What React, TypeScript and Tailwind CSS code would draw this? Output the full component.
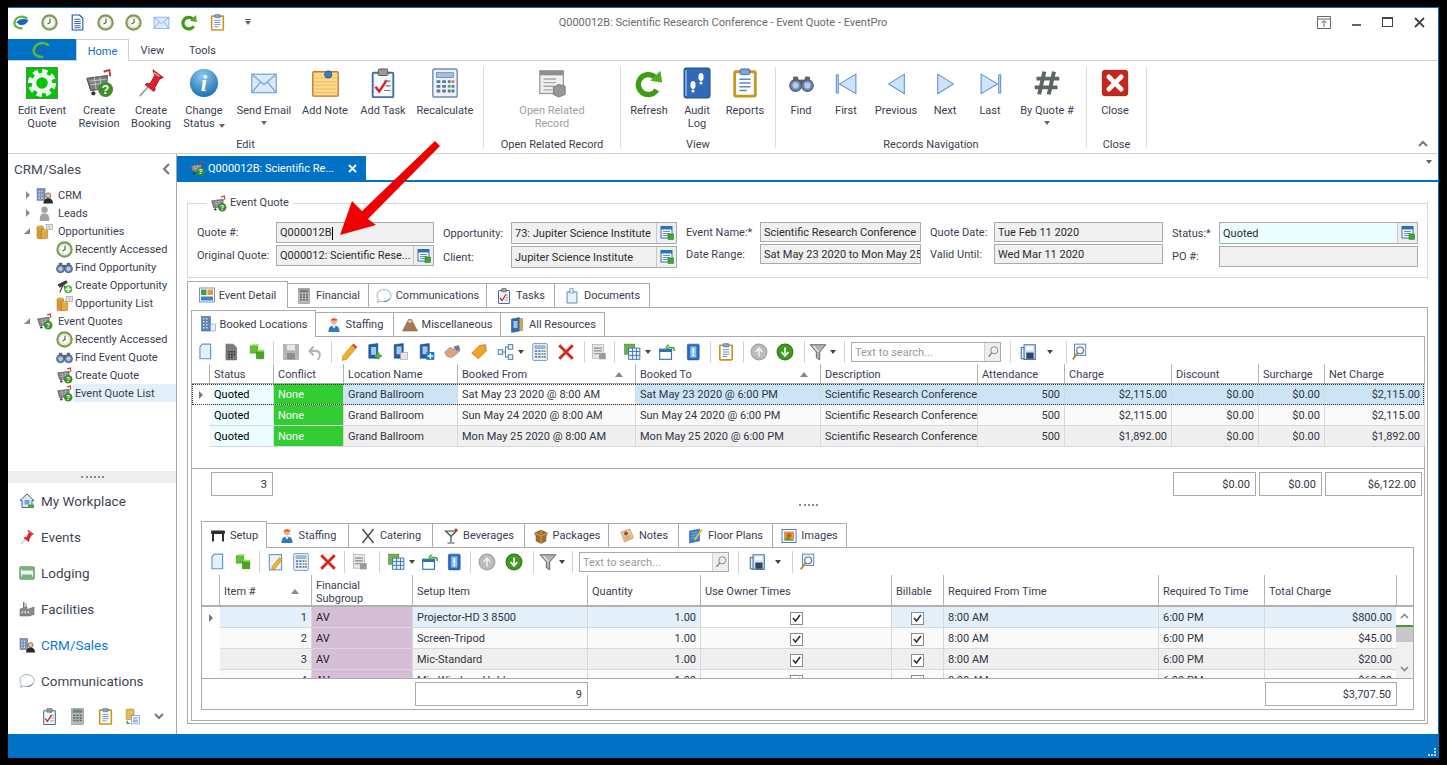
import type { ReactNode } from 'react'

const FONT = "font-['Roboto','Liberation_Sans',sans-serif]"

// every icon is drawn on a 32x32 box and scaled by size
const icons: Record<string, ReactNode> = {
  logo: (<g fill="none"><path d="M27 9C20 2 6 4 3 15c-2 8 6 13 15 12" stroke="#5fb53a" strokeWidth="4" /><path d="M7 16c4-6 14-8 21-4-2 7-11 10-17 7" fill="#1268b8" stroke="#1268b8" strokeWidth="1.5" /></g>),
  clock: (<g><circle cx="16" cy="16" r="13.5" fill="#eef3e4" stroke="#7f9a55" strokeWidth="4" /><circle cx="16" cy="16" r="9" fill="#fff" stroke="#b9c99a" /><path d="M17 9v7l-5 3" fill="none" stroke="#3d4a2a" strokeWidth="2" /></g>),
  doc: (<g><path d="M6 2h14l6 6v22H6z" fill="#fff" stroke="#1d4f9f" strokeWidth="2" /><path d="M10 10h12M10 14h12M10 18h12M10 22h12M10 26h12" stroke="#2d62b5" strokeWidth="2" /></g>),
  mail: (<g><rect x="2" y="6" width="28" height="21" fill="#d9ebfb" stroke="#7ea6d4" strokeWidth="1.5" /><path d="M2 6l14 12L30 6M2 27l10-12M30 27L20 15" fill="none" stroke="#7ea6d4" strokeWidth="1.5" /></g>),
  refresh: (<g fill="none"><path d="M24 23a11 11 0 1 1-2-14" stroke="#3f9a16" strokeWidth="6" /><path d="M17 13l13 2-2-13z" fill="#4fae1d" /></g>),
  clip: (<g><rect x="5" y="4" width="22" height="26" rx="1" fill="#fff" stroke="#c8971f" strokeWidth="3" /><rect x="11" y="1" width="10" height="6" rx="1" fill="#7aa5d8" stroke="#3e6ea8" /><path d="M10 12h12M10 16h12M10 20h12M10 24h8" stroke="#5a8ac4" strokeWidth="1.6" /></g>),
  gear: (<g><rect x="0.5" y="0.5" width="31" height="31" fill="#00c800" stroke="#6d7d6d" /><circle cx="16" cy="16" r="11.5" fill="none" stroke="#f4f4f4" strokeWidth="5" strokeDasharray="5.2 3.8" /><circle cx="16" cy="16" r="8" fill="#00c800" stroke="#f4f4f4" strokeWidth="4.5" /></g>),
  cart: (<g><path d="M21 4l6-2 1 7" fill="none" stroke="#c7303a" strokeWidth="2" /><path d="M3 11l22-3-1 14-17 2z" fill="#7b7f7f" stroke="#444" /><path d="M6 14l18-2M7 18l16-2M11 10l2 13M17 9l1 13" stroke="#c7c9c9" /><circle cx="10" cy="27" r="2.2" fill="#333" /><circle cx="19" cy="26" r="2.2" fill="#333" /><circle cx="23" cy="23" r="8" fill="#3d8f2c" /><text x="23" y="28" fontSize="13" fontWeight="700" fill="#fff" textAnchor="middle" fontFamily="Liberation Sans">?</text></g>),
  pin: (<g><path d="M18 2l11 8-4 2-5 9c1 2 0 3-1 4l-9-7c1-2 3-2 5-1l5-9z" fill="#e3202a" stroke="#a80f18" /><path d="M13 20l-9 10" stroke="#9a9a9a" strokeWidth="1.6" /><path d="M19 5l6 4" stroke="#ff9a9a" strokeWidth="1.5" /></g>),
  info: (<g><defs><radialGradient id="inf" cx="0.45" cy="0.25" r="0.8"><stop offset="0" stopColor="#8cc9f2" /><stop offset="1" stopColor="#1569ad" /></radialGradient></defs><circle cx="16" cy="16" r="15" fill="url(#inf)" /><text x="16" y="25" fontSize="24" fontWeight="700" fontStyle="italic" fill="#fff" textAnchor="middle" fontFamily="Liberation Serif">i</text></g>),
  note: (<g><rect x="2" y="3" width="28" height="27" rx="1" fill="#fbd88a" stroke="#c5762a" strokeWidth="1.5" /><path d="M4 10h24M4 14h24M4 18h24M4 22h24M4 26h24" stroke="#f2bb55" /><circle cx="19" cy="6" r="4" fill="#3f7cc4" stroke="#275a97" /></g>),
  task: (<g><rect x="5" y="5" width="22" height="26" rx="1" fill="#f4f7fb" stroke="#3f6ea8" strokeWidth="2" /><rect x="11" y="1" width="10" height="7" rx="1" fill="#9a9a9a" stroke="#555" /><path d="M8 20l4 5 8-12" fill="none" stroke="#d61f26" strokeWidth="2.6" /><path d="M17 14h7M19 19h5M17 24h7" stroke="#777" strokeWidth="1.3" /></g>),
  calc: (<g><rect x="3" y="1" width="26" height="30" rx="2" fill="#eef2f8" stroke="#6f8bb3" strokeWidth="1.5" /><rect x="7" y="5" width="18" height="5" fill="#9fc0e2" stroke="#5f83ad" strokeWidth="0.8" /><path d="M7 13h4v3H7zM13 13h4v3h-4zM19 13h3v3h-3zM7 18h4v3H7zM13 18h4v3h-4zM7 23h4v3H7zM13 23h4v3h-4zM19 23h3v3h-3z" fill="#5878a8" /><path d="M23 13h3v3h-3z" fill="#d8883a" /><path d="M19 18h3v3h-3z" fill="#6aa33a" /><path d="M23 18h3v3h-3zM23 23h3v3h-3z" fill="#5878a8" /></g>),
  openrec: (<g><rect x="2" y="2" width="26" height="25" fill="#f1f1f1" stroke="#9c9c9c" strokeWidth="1.5" /><rect x="2" y="2" width="26" height="5" fill="#8e8e8e" /><path d="M6 11h14M6 15h14M6 19h12M6 23h10" stroke="#a8a8a8" strokeWidth="1.5" /><path d="M17 20l6-3 7 2v9l-7 3-6-3z" fill="#979797" stroke="#777" /></g>),
  audit: (<g><rect x="3" y="1" width="26" height="30" rx="2" fill="#3268b8" stroke="#1f4c8f" /><path d="M5 3v26" stroke="#7ba4dc" strokeWidth="2" /><ellipse cx="20" cy="10" rx="2.6" ry="4" fill="#fff" /><circle cx="20" cy="16" r="1.5" fill="#fff" /><ellipse cx="12" cy="18" rx="2.6" ry="4" fill="#fff" /><circle cx="12" cy="24" r="1.5" fill="#fff" /></g>),
  binoc: (<g><rect x="12" y="11" width="8" height="8" fill="#555e70" /><circle cx="8.5" cy="18.5" r="7.5" fill="#6d87b0" stroke="#4d586a" strokeWidth="1.5" /><circle cx="23.5" cy="18.5" r="7.5" fill="#6d87b0" stroke="#4d586a" strokeWidth="1.5" /><circle cx="8.5" cy="18.5" r="4" fill="#b3cbea" /><circle cx="23.5" cy="18.5" r="4" fill="#b3cbea" /><rect x="5" y="7" width="7" height="5" rx="2" fill="#5f6775" /><rect x="20" y="7" width="7" height="5" rx="2" fill="#5f6775" /></g>),
  first: (<g fill="#cfe3f8" stroke="#5c94d2" strokeWidth="1.4"><rect x="3" y="5" width="2.5" height="23" /><path d="M28 4v25L7 16.5z" /></g>),
  prev: (<path d="M26 4v25L6 16.5z" fill="#cfe3f8" stroke="#5c94d2" strokeWidth="1.4" />),
  next: (<path d="M6 4v25l20-12.5z" fill="#cfe3f8" stroke="#5c94d2" strokeWidth="1.4" />),
  last: (<g fill="#cfe3f8" stroke="#5c94d2" strokeWidth="1.4"><rect x="26.5" y="5" width="2.5" height="23" /><path d="M4 4v25l21-12.5z" /></g>),
  hash: (<path d="M13 3L7 29M24 3l-6 26M4 11h26M2 21h26" fill="none" stroke="#5c655f" strokeWidth="4.5" />),
  closeRed: (<g><rect x="1.5" y="1.5" width="29" height="29" rx="3" fill="#c8261a" stroke="#8f1a12" /><path d="M9 9l14 14M23 9L9 23" stroke="#fff" strokeWidth="5.5" strokeLinecap="round" /></g>),
  lookup: (<g><rect x="4" y="3" width="22" height="23" fill="#fff" stroke="#2f6fb5" strokeWidth="2" /><rect x="4" y="3" width="22" height="6" fill="#2f6fb5" /><path d="M8 13h14M8 17h14M8 21h10" stroke="#5d8fc8" strokeWidth="2" /><rect x="18" y="18" width="11" height="11" fill="#3aa82f" stroke="#1f7a18" /></g>),
  crm: (<g><rect x="2" y="3" width="15" height="22" fill="#7f93b8" stroke="#54688c" /><path d="M5 7h2v3H5zM10 7h2v3h-2zM5 13h2v3H5zM10 13h2v3h-2zM5 19h2v3H5zM10 19h2v3h-2z" fill="#dfe7f3" /><circle cx="23" cy="16" r="5" fill="#e9bf9a" stroke="#333" /><path d="M14 31c0-7 4-10 9-10s9 3 9 10z" fill="#26292e" /></g>),
  lead: (<g fill="#a3a3a3"><circle cx="16" cy="9" r="6" /><path d="M7 30c0-12 3-14 9-14s9 2 9 14z" /></g>),
  opps: (<g><ellipse cx="8" cy="8" rx="6" ry="3" fill="#f0c060" stroke="#a86f18" /><path d="M2 8v20c0 2 12 2 12 0V8" fill="#d89a30" stroke="#a86f18" /><ellipse cx="16" cy="15" rx="6" ry="3" fill="#f0c060" stroke="#a86f18" /><path d="M10 15v13c0 2 12 2 12 0V15" fill="#e2aa45" stroke="#a86f18" /><rect x="19" y="3" width="12" height="9" fill="#dfe3e8" stroke="#7b8794" /><path d="M25 5v5" stroke="#7b8794" /></g>),
  createopp: (<g><path d="M3 14l16-8 3 5-15 9z" fill="#3a3a3a" /><path d="M13 16l-6 13M15 16l3 10" stroke="#3a3a3a" strokeWidth="2" /><circle cx="23" cy="23" r="7.5" fill="#58b947" /><path d="M23 18v10M18 23h10" stroke="#fff" strokeWidth="2.6" /></g>),
  house: (<g><path d="M16 2L2 15h4v14h20V15h4z" fill="#dbe8f6" stroke="#41659a" strokeWidth="2" /><rect x="11" y="14" width="10" height="9" fill="#7ba1d0" /><rect x="18" y="23" width="12" height="7" fill="#4aa23c" /></g>),
  bed: (<g><rect x="1" y="3" width="30" height="26" rx="3" fill="#79b27d" stroke="#5a8f5f" /><rect x="5" y="11" width="22" height="8" fill="#eef7ee" /><path d="M5 9v14M27 11v12" stroke="#eef7ee" strokeWidth="2" /></g>),
  factory: (<g><path d="M8 2h3v12H8zM13 5h2v9h-2z" fill="#777" /><path d="M2 16l14-4v5l14-5v15l-10 3H2z" fill="#8b8b8b" stroke="#5b5b5b" /><path d="M5 21h3v3H5zM11 21h3v3h-3zM17 21h3v3h-3z" fill="#eee" /></g>),
  bubble: (<g><path d="M16 3c8 0 14 5 14 12s-6 12-14 12c-3 0-5 0-7-1l-6 3 2-6C3 21 2 18 2 15 2 8 8 3 16 3z" fill="#fff" stroke="#8c9aa8" strokeWidth="1.6" /><path d="M27 21c-2 4-6 6-11 6" fill="none" stroke="#3e7cc0" strokeWidth="2" /></g>),
  calcgrey: (<g><rect x="5" y="1" width="22" height="30" fill="#b9b9b9" stroke="#7a7a7a" /><rect x="7" y="3" width="18" height="6" fill="#6c8a72" /><path d="M8 12h4v3H8zM14 12h4v3h-4zM20 12h4v3h-4zM8 17h4v3H8zM14 17h4v3h-4zM20 17h4v3h-4zM8 22h4v3H8zM14 22h4v3h-4zM20 22h4v3h-4z" fill="#666" /></g>),
  docs: (<g><rect x="4" y="2" width="15" height="20" rx="2" fill="#e8b860" stroke="#a87a20" /><rect x="14" y="14" width="15" height="16" fill="#eef4fb" stroke="#4a7ab8" /><path d="M17 19h9M17 23h9M17 26h9" stroke="#4a7ab8" strokeWidth="1.4" /><path d="M6 24v5h5" fill="none" stroke="#2ea42a" strokeWidth="2.4" /></g>),
  detail: (<g><rect x="1" y="2" width="30" height="28" fill="#fff" stroke="#3e74b4" strokeWidth="1.5" /><rect x="4" y="5" width="11" height="11" fill="#4e9a3c" /><rect x="17" y="5" width="11" height="11" fill="#e39a3a" /><rect x="4" y="19" width="24" height="8" fill="#3e84c8" /></g>),
  sheet: (<g><path d="M7 7l4-5h15v26H7z" fill="#e5f0fb" stroke="#5b94cf" strokeWidth="2" /></g>),
  docblue: (<g><path d="M12 4v4H6v22h20V8h-8V4z" fill="#e8f1fb" stroke="#4d7fb8" strokeWidth="1.8" /><rect x="12" y="1" width="6" height="9" fill="#e8f1fb" stroke="#4d7fb8" /></g>),
  building: (<g><rect x="3" y="1" width="18" height="29" fill="#5f81b8" stroke="#3a5a8f" /><path d="M6 4h3v3H6zM12 4h3v3h-3zM6 10h3v3H6zM12 10h3v3h-3zM6 16h3v3H6zM12 16h3v3h-3zM6 22h3v3H6zM12 22h3v3h-3z" fill="#dce7f5" /><rect x="21" y="16" width="10" height="14" fill="#eef2f8" stroke="#5f81b8" /></g>),
  staff: (<g><circle cx="16" cy="9" r="6" fill="#f0b48a" /><path d="M9 7c1-6 13-6 14 0z" fill="#e8531f" /><path d="M5 30c0-10 4-13 11-13s11 3 11 13z" fill="#2f7bc0" /><path d="M12 17l4 6 4-6z" fill="#fff" /></g>),
  mountain: (<g><path d="M1 28L13 5h6l12 23z" fill="#a57b55" stroke="#6f4d2f" /><path d="M12 7h8l-2 5-2-2-2 2z" fill="#e8ddd0" /></g>),
  allres: (<g><path d="M5 4l16-3v27l-16 3z" fill="#2f6db3" stroke="#1c4a80" /><path d="M21 3h6v24h-6z" fill="#d5a857" stroke="#8c6a2c" /><rect x="9" y="8" width="8" height="14" fill="#9cc3eb" /></g>),
  table: (<g><rect x="2" y="7" width="28" height="7" rx="2" fill="#2e2e2e" /><path d="M4 13h4v16H4zM24 13h4v16h-4z" fill="#2e2e2e" /></g>),
  cutlery: (<path d="M5 2l22 28M27 2L5 30" stroke="#404040" strokeWidth="2.6" fill="none" />),
  glass: (<g fill="none" stroke="#4a4a4a" strokeWidth="2.4"><path d="M5 6h22L16 17z" fill="#dfe6ea" /><path d="M16 17v11M9 30h14" /><circle cx="26" cy="4" r="2" stroke="#c8301e" /></g>),
  package: (<g><path d="M16 4l13 6-3 6v10l-10 5-10-5V16l-3-6z" fill="#a66f2f" stroke="#6b4418" /><path d="M16 4v8M3 10l13 6 13-6M16 16v15" fill="none" stroke="#e0b070" strokeWidth="1.5" /></g>),
  notes: (<g><path d="M4 8l18-6 7 18-18 8z" fill="#e8c890" stroke="#9c7a40" /><circle cx="14" cy="11" r="4" fill="#c03a30" /><path d="M10 20l13-5M12 24l12-5" stroke="#9c7a40" /></g>),
  floor: (<g><path d="M3 6l20-4v24L3 30z" fill="#3c7fd0" stroke="#1f5498" /><path d="M7 10l12-2M7 15l12-2M7 20l12-2" stroke="#bcd8f6" /><path d="M28 3L13 24" stroke="#f0c020" strokeWidth="3.5" /></g>),
  image: (<g><rect x="2" y="3" width="28" height="26" fill="#fff" stroke="#4e7fb6" strokeWidth="2" /><rect x="6" y="7" width="20" height="18" fill="#d99a4a" /><circle cx="16" cy="15" r="5" fill="#c95c28" /><path d="M6 25l6-7 14 7z" fill="#5a9a3a" /></g>),
  docgrey: (<g><path d="M7 2h13l6 6v22H7z" fill="#7c7c7c" stroke="#5f5f5f" /><path d="M11 14h3v3h-3zM16 14h3v3h-3zM21 14h2v3h-2zM11 19h3v3h-3zM16 19h3v3h-3zM21 19h2v3h-2zM11 24h3v3h-3zM16 24h3v3h-3z" fill="#333" /></g>),
  cubes: (<g><path d="M4 5h13v13H4z" fill="#63c02e" stroke="#3d8a14" /><path d="M15 15h13v13H15z" fill="#4ba61f" stroke="#2e7a0c" /><path d="M4 5l4-3h13l-4 3zM15 15l4-3h11l-2 3z" fill="#96de5c" /></g>),
  save: (<g><rect x="3" y="3" width="26" height="26" fill="#b4b4b4" stroke="#929292" /><rect x="9" y="3" width="14" height="10" fill="#e8e8e8" /><rect x="9" y="18" width="14" height="11" fill="#8c8c8c" /></g>),
  undo: (<path d="M21 30c5-5 6-16-4-18H9l4-5-3-2-8 9 8 9 3-2-4-5h7c7 1 6 10 1 13z" fill="#b4b4b4" />),
  pencil: (<g><path d="M5 23L21 4l7 6-16 19-8 2z" fill="#f0b030" stroke="#b87a10" /><path d="M21 4l3-3 7 6-3 3z" fill="#d04a3a" /></g>),
  editdoc: (<g><rect x="4" y="3" width="22" height="27" fill="#eaf2fb" stroke="#4a7fb8" strokeWidth="1.6" /><path d="M9 24L22 8l5 4-13 16-6 2z" fill="#f0b030" stroke="#b87a10" /></g>),
  bookadd: (<g><path d="M5 3l16-2v26H5z" fill="#1f5fa8" stroke="#153f72" /><rect x="9" y="7" width="9" height="14" fill="#a6c8ee" /><path d="M22 17v12M16 23h12" stroke="#4bb33a" strokeWidth="4.5" /></g>),
  bookcopy: (<g><path d="M4 3l16-2v26H4z" fill="#1f5fa8" stroke="#153f72" /><rect x="8" y="6" width="9" height="14" fill="#a6c8ee" /><rect x="15" y="17" width="13" height="12" fill="#e6e6e6" stroke="#9a9a9a" /></g>),
  bookplus: (<g><path d="M4 3l16-2v26H4z" fill="#1f5fa8" stroke="#153f72" /><rect x="8" y="6" width="9" height="14" fill="#a6c8ee" /><rect x="15" y="16" width="14" height="14" fill="#1c78c8" /><path d="M22 18v10M17 23h10" stroke="#fff" strokeWidth="2.6" /></g>),
  hands: (<g><path d="M3 16l9-8 7 2 9-5 2 9-10 9-6 3-8-3z" fill="#d6a585" stroke="#a77a5c" /><path d="M19 6l9-2 2 8-6 2z" fill="#5f7ca8" /></g>),
  tag: (<g><path d="M3 18L17 4l11-1 1 11-14 14z" fill="#f2a322" stroke="#a8660a" /><circle cx="23" cy="9" r="2" fill="#fff" stroke="#a8660a" /></g>),
  network: (<g fill="#eef4fb" stroke="#4f7cae" strokeWidth="1.8"><rect x="2" y="12" width="8" height="8" /><rect x="20" y="3" width="8" height="8" /><rect x="20" y="21" width="8" height="8" /><path d="M10 16h5V7h5M15 16v9h5" fill="none" /></g>),
  xred: (<path d="M4 4l24 24M28 4L4 28" stroke="#d42a1e" strokeWidth="5.2" />),
  greydoc: (<g><rect x="4" y="3" width="20" height="24" fill="#e6e6e6" stroke="#9c9c9c" /><path d="M7 9h14M7 14h14M7 19h10" stroke="#8a8a8a" strokeWidth="2" /><rect x="16" y="18" width="12" height="11" fill="#9a9a9a" /></g>),
  gridg: (<g><rect x="3" y="2" width="18" height="18" fill="#6cb34a" stroke="#3a7f1e" /><rect x="10" y="9" width="20" height="20" fill="#e6f0fb" stroke="#2e6bb0" strokeWidth="1.5" /><path d="M10 15h20M10 22h20M17 9v20M24 9v20" stroke="#2e6bb0" strokeWidth="1.5" /></g>),
  window: (<g><rect x="3" y="11" width="21" height="18" fill="#fff" stroke="#2f6fb5" strokeWidth="2" /><rect x="3" y="11" width="21" height="5" fill="#2f6fb5" /><path d="M18 8h7c3 0 4 2 4 6M14 8l5-5M14 8l5 4" fill="none" stroke="#3aa82f" strokeWidth="2.6" /></g>),
  bookinfo: (<g><rect x="6" y="2" width="21" height="28" rx="2" fill="#2a6bc0" stroke="#174a8c" /><rect x="11" y="6" width="11" height="20" fill="#8cbcf0" /><path d="M16.500 9v9M16.500 20v3" stroke="#fff" strokeWidth="3" /></g>),
  up: (<g><circle cx="16" cy="16" r="14" fill="#bcbcbc" stroke="#a2a2a2" strokeWidth="2" /><path d="M16 24V12M10 16l6-7 6 7" fill="none" stroke="#eee" strokeWidth="3" /></g>),
  down: (<g><circle cx="16" cy="16" r="14" fill="#3f9a22" stroke="#2c7a12" strokeWidth="2" /><path d="M16 8v12M10 16l6 7 6-7" fill="none" stroke="#fff" strokeWidth="3" /></g>),
  funnel: (<g><path d="M2 3h28L19 16v14l-6-4V16z" fill="#aeb4b8" stroke="#555" strokeWidth="1.5" /><path d="M8 5l9 11" stroke="#eee" strokeWidth="2" /></g>),
  floppy: (<g><rect x="4" y="8" width="16" height="20" fill="#e2edf8" stroke="#4a79b0" strokeWidth="2" /><path d="M9 3h20v26H9z" fill="#d5e4f4" stroke="#4a79b0" strokeWidth="2" /><rect x="13" y="17" width="13" height="11" fill="#33465f" /><rect x="13" y="6" width="12" height="7" fill="#fff" /></g>),
  zoomdoc: (<g><rect x="8" y="2" width="20" height="20" fill="#eaf2fb" stroke="#4a7fb8" strokeWidth="1.6" /><circle cx="18" cy="13" r="6" fill="#fff" stroke="#607080" strokeWidth="2" /><path d="M13 18L5 29" stroke="#c08a3a" strokeWidth="3.5" /></g>),
  magnify: (<g fill="none" stroke="#7b7b7b" strokeWidth="2"><circle cx="19" cy="12" r="8" /><path d="M13 18L6 27" strokeWidth="3" /></g>),
}

function Ico({ n, s = 16 }: { n: string; s?: number }) {
  return (
    <svg viewBox="0 0 32 32" width={s} height={s} className="shrink-0">
      {icons[n]}
    </svg>
  )
}

function Caret({ c = 'border-t-[#666]' }: { c?: string }) {
  return <span className={`inline-block w-0 h-0 border-x-[3px] border-x-transparent border-t-[4px] ${c}`} />
}

function RibbonBtn({ icon, lines, w, caret, off, s = 32 }: { icon: string; lines: string[]; w: string; caret?: boolean; off?: boolean; s?: number }) {
  return (
    <div className={`${w} flex flex-col items-center shrink-0 pt-[6px]`}>
      <div className="h-[32px] flex items-center justify-center"><Ico n={icon} s={s} /></div>
      <div className={`mt-[5px] leading-[13px] text-center whitespace-nowrap ${off ? 'text-[#a0a0a0]' : 'text-[#3a4050]'}`}>
        {lines.map((l, i) => (
          <div key={i}>
            {l}
            {caret && i === lines.length - 1 && lines.length > 1 && <span className="ml-1 inline-block align-middle"><Caret /></span>}
          </div>
        ))}
        {caret && lines.length === 1 && <div className="-mt-[2px]"><Caret /></div>}
      </div>
    </div>
  )
}

function RibbonGroup({ label, w, pl, children }: { label: string; w: string; pl: string; children: ReactNode }) {
  return (
    <div className={`${w} shrink-0 relative flex flex-col h-full pr-px after:content-[''] after:absolute after:right-0 after:top-[6px] after:bottom-[5px] after:w-px after:bg-[#dcdcdc]`}>
      <div className={`flex flex-1 ${pl}`}>{children}</div>
      <div className="h-[15px] pb-px leading-[13px] text-center text-[#3a4050]">{label}</div>
    </div>
  )
}

const treeRows = [
  { lv: 0, arrow: 'closed', icon: 'crm', t: 'CRM' },
  { lv: 0, arrow: 'closed', icon: 'lead', t: 'Leads' },
  { lv: 0, arrow: 'open', icon: 'opps', t: 'Opportunities' },
  { lv: 1, icon: 'clock', t: 'Recently Accessed' },
  { lv: 1, icon: 'binoc', t: 'Find Opportunity' },
  { lv: 1, icon: 'createopp', t: 'Create Opportunity' },
  { lv: 1, icon: 'opps', t: 'Opportunity List' },
  { lv: 0, arrow: 'open', icon: 'cart', t: 'Event Quotes' },
  { lv: 1, icon: 'clock', t: 'Recently Accessed' },
  { lv: 1, icon: 'binoc', t: 'Find Event Quote' },
  { lv: 1, icon: 'cart', t: 'Create Quote' },
  { lv: 1, icon: 'cart', t: 'Event Quote List', sel: true },
]

const navRows = [
  { icon: 'house', t: 'My Workplace' },
  { icon: 'pin', t: 'Events' },
  { icon: 'bed', t: 'Lodging' },
  { icon: 'factory', t: 'Facilities' },
  { icon: 'crm', t: 'CRM/Sales', on: true },
  { icon: 'bubble', t: 'Communications' },
]

function Sidebar() {
  return (
    <aside className="w-[169px] shrink-0 flex flex-col border-r border-[#a8a8a8]">
      <div className="h-[32px] shrink-0 pb-[2px] flex items-center justify-between pl-[6px] pr-[6px] text-[13.5px] text-[#444a58]">
        <span>CRM/Sales</span>
        <svg width="8" height="12" viewBox="0 0 8 12"><path d="M7 1L2 6l5 5" fill="none" stroke="#777" strokeWidth="2" /></svg>
      </div>
      <div className="flex-1">
        {treeRows.map((r, i) => (
          <div key={i} className="h-[18px] flex items-center text-[#3a4050]">
            {r.lv === 0 ? (
              <>
                <span className="w-[28px] flex justify-end pr-[6px]">
                  {r.arrow === 'closed' ? (
                    <span className="w-0 h-0 border-y-[4px] border-y-transparent border-l-[4px] border-l-[#8a8a8a]" />
                  ) : (
                    <span className="w-0 h-0 border-b-[6px] border-b-[#8a8a8a] border-l-[6px] border-l-transparent" />
                  )}
                </span>
                <Ico n={r.icon} s={17} />
                <span className="ml-[5px] pt-[2px]">{r.t}</span>
              </>
            ) : (
              <>
                <span className="w-[48px] shrink-0" />
                <Ico n={r.icon} s={17} />
                <span className={`pl-[2px] pt-[2px] h-full flex-1 flex items-center ${r.sel ? 'bg-[#e3eff9]' : ''}`}>{r.t}</span>
              </>
            )}
          </div>
        ))}
      </div>
      <div className="h-3 shrink-0 bg-[#eeeeee] flex items-center justify-center">
        <span className="w-[23px] border-t-2 border-dotted border-[#8a8a8a]" />
      </div>
      {navRows.map((r) => (
        <div key={r.t} className={`h-9 shrink-0 flex items-center pl-[11px] gap-[6px] text-[13.5px] ${r.on ? 'text-[#0e7ad2]' : 'text-[#3f4654]'}`}>
          <Ico n={r.icon} s={16} />
          <span>{r.t}</span>
        </div>
      ))}
      <div className="h-[35px] shrink-0 flex items-center pl-[33px]">
        <span className="w-[28px]"><Ico n="task" s={17} /></span>
        <span className="w-[28px]"><Ico n="calcgrey" s={17} /></span>
        <span className="w-[27px]"><Ico n="clip" s={17} /></span>
        <span className="w-[30px]"><Ico n="docs" s={17} /></span>
        <svg width="10" height="7" viewBox="0 0 10 7"><path d="M1 1l4 4 4-4" fill="none" stroke="#777" strokeWidth="2" /></svg>
      </div>
    </aside>
  )
}

function Field({ label, labelW, inputW, h, value, lookup, tone, cursor }: { label: string; labelW: string; inputW: string; h: string; value: string; lookup?: boolean; tone?: string; cursor?: boolean }) {
  return (
    <div className="flex items-center">
      <div className={`${labelW} shrink-0 pt-[2px] text-[#3a4050] whitespace-nowrap`}>{label}</div>
      <div className={`${inputW} ${h} ${tone ?? 'bg-[#f0f0f0]'} shrink-0 flex items-center border border-[#ababab]`}>
        <div className="flex-1 min-w-0 px-[3px] pt-[2px] whitespace-nowrap overflow-hidden text-[#2c2c2c]">
          {value}
          {cursor && <span className="inline-block w-px h-[13px] bg-black align-middle" />}
        </div>
        {lookup && (
          <div className="w-[20px] h-full shrink-0 border-l border-[#c8c8c8] bg-[#eeeeee] flex items-center justify-center">
            <Ico n="lookup" s={16} />
          </div>
        )}
      </div>
    </div>
  )
}

function QuoteForm() {
  return (
    <fieldset className="border border-[#d6d6d6] h-[84px] mt-[12px] pl-[9px] shrink-0">
      <legend className="ml-[9px] px-1 flex items-center gap-[3px] h-[18px] text-[#3a4050]">
        <Ico n="cart" s={17} /> Event Quote
      </legend>
      <div className="flex gap-[9px] pt-[10px]">
        <div className="flex flex-col gap-[2px]">
          <Field label="Quote #:" labelW="w-[79px]" inputW="w-[158px]" h="h-[21px]" value="Q000012B" cursor />
          <Field label="Original Quote:" labelW="w-[79px]" inputW="w-[158px]" h="h-[21px]" value="Q000012: Scientific Rese..." lookup />
        </div>
        <div className="flex flex-col gap-[2px]">
          <Field label="Opportunity:" labelW="w-[68px]" inputW="w-[166px]" h="h-[22px]" value="73: Jupiter Science Institute" lookup />
          <Field label="Client:" labelW="w-[68px]" inputW="w-[166px]" h="h-[22px]" value="Jupiter Science Institute" lookup />
        </div>
        <div className="flex flex-col gap-[2px]">
          <Field label="Event Name:*" labelW="w-[74px]" inputW="w-[161px]" h="h-[20px]" value="Scientific Research Conference" />
          <Field label="Date Range:" labelW="w-[74px]" inputW="w-[161px]" h="h-[20px]" value="Sat May 23 2020 to Mon May 25" />
        </div>
        <div className="flex flex-col gap-[2px]">
          <Field label="Quote Date:" labelW="w-[64px]" inputW="w-[169px]" h="h-[20px]" value="Tue Feb 11 2020" />
          <Field label="Valid Until:" labelW="w-[64px]" inputW="w-[169px]" h="h-[20px]" value="Wed Mar 11 2020" />
        </div>
        <div className="flex flex-col gap-[2px]">
          <Field label="Status:*" labelW="w-[47px]" inputW="w-[199px]" h="h-[22px]" value="Quoted" lookup tone="bg-[#ecfdff]" />
          <Field label="PO #:" labelW="w-[47px]" inputW="w-[199px]" h="h-[21px]" value="" />
        </div>
      </div>
    </fieldset>
  )
}

function Tab({ icon, t, w, on }: { icon: string; t: string; w: string; on?: boolean }) {
  return (
    <div className={`${w} shrink-0 flex items-center justify-center gap-[4px] border border-[#ababab] whitespace-nowrap text-[#3a4050] ${on ? 'h-[27px] -mb-px border-b-0 bg-white z-10' : 'h-[24px] border-b-0 -ml-px'}`}>
      <Ico n={icon} s={16} />
      <span className="pt-[2px]">{t}</span>
    </div>
  )
}

type Tool = [string, string]

function ToolBtn({ item }: { item: Tool }) {
  const [name, w] = item
  return (
    <div className={`${w} shrink-0 h-full flex items-center justify-center`}>
      {name === '|' && <span className="w-px h-[22px] bg-[#d2d2d2]" />}
      {name === 'v' && <Caret c="border-t-[#444]" />}
      {name !== '|' && name !== 'v' && <Ico n={name} s={18} />}
    </div>
  )
}

const topTools: Tool[] = [
  ['sheet', 'w-[26px]'], ['docgrey', 'w-[26px]'], ['cubes', 'w-[26px]'], ['|', 'w-[6px]'], ['save', 'w-[30px]'], ['undo', 'w-[20px]'], ['|', 'w-[11px]'],
  ['pencil', 'w-[24px]'], ['bookadd', 'w-[28px]'], ['bookcopy', 'w-[24px]'], ['bookplus', 'w-[28px]'], ['hands', 'w-[22px]'], ['tag', 'w-[32px]'], ['network', 'w-[22px]'], ['v', 'w-[8px]'],
  ['calc', 'w-[30px]'], ['xred', 'w-[22px]'], ['|', 'w-[14px]'], ['greydoc', 'w-[16px]'], ['|', 'w-[14px]'], ['gridg', 'w-[22px]'], ['v', 'w-[10px]'], ['window', 'w-[28px]'], ['bookinfo', 'w-[24px]'], ['|', 'w-[10px]'],
  ['clip', 'w-[22px]'], ['|', 'w-[12px]'], ['up', 'w-[20px]'], ['down', 'w-[32px]'], ['|', 'w-[6px]'], ['funnel', 'w-[22px]'], ['v', 'w-[8px]'], ['|', 'w-[14px]'],
]
const topToolsEnd: Tool[] = [['|', 'w-[18px]'], ['floppy', 'w-[18px]'], ['v', 'w-[26px]'], ['|', 'w-[6px]'], ['zoomdoc', 'w-[20px]']]

const lowTools: Tool[] = [
  ['sheet', 'w-[30px]'], ['cubes', 'w-[22px]'], ['|', 'w-[10px]'], ['editdoc', 'w-[24px]'], ['calc', 'w-[26px]'], ['xred', 'w-[28px]'], ['|', 'w-[4px]'], ['greydoc', 'w-[28px]'], ['|', 'w-[10px]'],
  ['gridg', 'w-[24px]'], ['v', 'w-[8px]'], ['window', 'w-[28px]'], ['bookinfo', 'w-[20px]'], ['|', 'w-[12px]'], ['up', 'w-[22px]'], ['down', 'w-[32px]'], ['|', 'w-[7px]'], ['funnel', 'w-[22px]'], ['v', 'w-[6px]'], ['|', 'w-[14px]'],
]
const lowToolsEnd: Tool[] = [['|', 'w-[18px]'], ['floppy', 'w-[20px]'], ['v', 'w-[22px]'], ['|', 'w-[6px]'], ['zoomdoc', 'w-[24px]']]

function Search() {
  return (
    <div className="w-[150px] h-[20px] shrink-0 flex border border-[#ababab] bg-white">
      <span className="flex-1 pl-[3px] leading-[20px] text-[#9a9a9a]">Text to search...</span>
      <span className="w-[16px] border-l border-[#d0d0d0] bg-[#eeeeee] flex items-center justify-center"><Ico n="magnify" s={14} /></span>
    </div>
  )
}

function Toolbar({ a, b, h }: { a: Tool[]; b: Tool[]; h: string }) {
  return (
    <div className={`${h} shrink-0 pt-[2px] flex items-center`}>
      {a.map((it, i) => <ToolBtn key={i} item={it} />)}
      <Search />
      {b.map((it, i) => <ToolBtn key={i} item={it} />)}
    </div>
  )
}

function Head({ t, sort, nudge = 'pt-[2px]' }: { t: string; sort?: boolean; nudge?: string }) {
  return (
    <div className={`${nudge} flex items-center justify-between px-[4px] border-r border-[#b4b4b4] leading-[13px] text-[#3a4050] overflow-hidden`}>
      <span>{t}</span>
      {sort && <span className="mr-[8px] w-0 h-0 border-x-[4px] border-x-transparent border-b-[5px] border-b-[#888]" />}
    </div>
  )
}

function Cell({ t, right, bg, color, nudge = 'pt-[2px]' }: { t: ReactNode; right?: boolean; bg: string; color?: string; nudge?: string }) {
  return (
    <div className={`${bg} ${nudge} ${right ? 'justify-end' : ''} ${color ?? 'text-[#30353f]'} flex items-center px-[4px] border-r border-b border-[#d8d8d8] whitespace-nowrap overflow-hidden`}>
      {t}
    </div>
  )
}

const topCols = 'grid grid-cols-[18px_64px_70px_114px_178px_185px_157px_87px_107px_87px_66px_100px]'
const lowCols = 'grid grid-cols-[18px_92px_101px_175px_113px_191px_52px_215px_106px_132px]'
const lowHeadCols = 'grid grid-cols-[18px_92px_101px_175px_113px_191px_52px_215px_106px_132px_17px]'

const bookings = [
  ['Sat May 23 2020 @ 8:00 AM', 'Sat May 23 2020 @ 6:00 PM', '$2,115.00', '$2,115.00'],
  ['Sun May 24 2020 @ 8:00 AM', 'Sun May 24 2020 @ 6:00 PM', '$2,115.00', '$2,115.00'],
  ['Mon May 25 2020 @ 8:00 AM', 'Mon May 25 2020 @ 6:00 PM', '$1,892.00', '$1,892.00'],
]

const setups = [
  ['1', 'Projector-HD 3 8500', '$800.00'],
  ['2', 'Screen-Tripod', '$45.00'],
  ['3', 'Mic-Standard', '$20.00'],
  ['4', 'Mic-Wireless Holder', '$60.00'],
]

function RowMark() {
  return <span className="w-0 h-0 border-y-[4px] border-y-transparent border-l-[4px] border-l-[#777]" />
}

function TopGrid() {
  const header = ['Status', 'Conflict', 'Location Name', 'Booked From', 'Booked To', 'Description', 'Attendance', 'Charge', 'Discount', 'Surcharge', 'Net Charge']
  return (
    <div className="h-[104px] shrink-0">
      <div className={`${topCols} h-[20px] border-b border-[#a8a8a8]`}>
        <div className="border-r border-[#b4b4b4]" />
        {header.map((h, i) => <Head key={h} t={h} sort={i === 3 || i === 4} />)}
      </div>
      {bookings.map((b, i) => {
        const bg = i === 0 ? 'bg-[#cde4f7]' : i === 1 ? 'bg-[#fafafa]' : 'bg-[#efefef]'
        return (
          <div key={i} className={`${topCols} h-[21px] ${i === 0 ? 'outline-1 outline-dotted outline-[#333] -outline-offset-1' : ''}`}>
            <div className="flex items-center justify-center">{i === 0 && <RowMark />}</div>
            <Cell t="Quoted" bg="bg-[#ecfdff]" color="text-black" />
            <Cell t="None" bg="bg-[#32cd32]" color="text-white" />
            <Cell t="Grand Ballroom" bg={bg} />
            <Cell t={b[0]} bg={i === 0 ? 'bg-white' : bg} />
            <Cell t={b[1]} bg={bg} />
            <Cell t="Scientific Research Conference" bg={bg} />
            <Cell t="500" right bg={bg} />
            <Cell t={b[2]} right bg={bg} />
            <Cell t="$0.00" right bg={bg} />
            <Cell t="$0.00" right bg={bg} />
            <Cell t={b[3]} right bg={bg} />
          </div>
        )
      })}
    </div>
  )
}

function Total({ t, w }: { t: string; w: string }) {
  return <div className={`${w} h-[24px] shrink-0 pt-[2px] flex items-center justify-end pr-[5px] border border-[#ababab] text-[#30353f]`}>{t}</div>
}

function Check() {
  return (
    <div className="w-full flex justify-center">
      <span className="w-[13px] h-[13px] border border-[#8c8c8c] bg-white flex items-center justify-center">
        <svg width="9" height="8" viewBox="0 0 9 8"><path d="M1 4l2.500 3L8 1" fill="none" stroke="#333" strokeWidth="1.6" /></svg>
      </span>
    </div>
  )
}

function LowGrid() {
  const n = 'pt-[3px]'
  return (
    <>
      <div className={`${lowHeadCols} mt-px h-[32px] shrink-0 border-b-2 border-[#b0b0b0]`}>
        <div className="border-r border-[#b4b4b4]" />
        <Head t="Item #" sort nudge={n} />
        <Head t="Financial Subgroup" nudge={n} />
        <Head t="Setup Item" nudge={n} />
        <Head t="Quantity" nudge={n} />
        <Head t="Use Owner Times" nudge={n} />
        <Head t="Billable" nudge={n} />
        <Head t="Required From Time" nudge={n} />
        <Head t="Required To Time" nudge={n} />
        <Head t="Total Charge" nudge={n} />
        <div />
      </div>
      <div className="h-[71px] shrink-0 flex overflow-hidden">
        <div className="flex-1 min-w-0">
          {setups.map((s, i) => {
            const bg = i === 0 ? 'bg-[#e3eff9]' : i === 2 ? 'bg-[#efefef]' : 'bg-[#fafafa]'
            return (
              <div key={i} className={`${lowCols} h-[21px]`}>
                <div className="flex items-center justify-center">{i === 0 && <RowMark />}</div>
                <Cell t={s[0]} right bg={bg} nudge={n} />
                <Cell t="AV" bg="bg-[#d6bfd6]" color="text-[#222]" nudge={n} />
                <Cell t={s[1]} bg={bg} nudge={n} />
                <Cell t="1.00" right bg={bg} nudge={n} />
                <Cell t={<Check />} bg={i === 0 ? 'bg-white' : bg} />
                <Cell t={<Check />} bg={bg} />
                <Cell t="8:00 AM" bg={bg} nudge={n} />
                <Cell t="6:00 PM" bg={bg} nudge={n} />
                <Cell t={s[2]} right bg={bg} nudge={n} />
              </div>
            )
          })}
        </div>
        <div className="w-[17px] shrink-0 bg-[#f0f0f0] flex flex-col items-center">
          <div className="h-[18px] w-full bg-white flex items-center justify-center">
            <svg width="9" height="6" viewBox="0 0 9 6"><path d="M1 5l3.500-3.500L8 5" fill="none" stroke="#888" strokeWidth="1.600" /></svg>
          </div>
          <div className="h-[17px] w-full bg-[#c8c8c8] border-t-2 border-[#4d8f3a] border-x-0" />
          <div className="flex-1 flex items-end pb-[6px]">
            <svg width="9" height="6" viewBox="0 0 9 6"><path d="M1 1l3.500 3.500L8 1" fill="none" stroke="#888" strokeWidth="1.600" /></svg>
          </div>
        </div>
      </div>
      <div className="flex-1 border-t border-[#ababab] flex items-start pt-[3px] pl-[213px] pr-[16px]">
        <Total t="9" w="w-[173px]" />
        <div className="flex-1" />
        <Total t="$3,707.50" w="w-[132px]" />
      </div>
    </>
  )
}

function DetailPanel() {
  return (
    <div className="flex-1 flex flex-col border border-[#ababab] pl-[3px] pr-[2px] pt-[2px] pb-[2px]">
      <div className="flex items-end h-[26px] shrink-0">
        <Tab icon="building" t="Booked Locations" w="w-[125px]" on />
        <Tab icon="staff" t="Staffing" w="w-[79px]" />
        <Tab icon="mountain" t="Miscellaneous" w="w-[108px]" />
        <Tab icon="allres" t="All Resources" w="w-[105px]" />
      </div>
      <div className="flex-1 flex flex-col border border-[#ababab]">
        <Toolbar a={topTools} b={topToolsEnd} h="h-[27px]" />
        <TopGrid />
        <div className="h-[53px] shrink-0 border-t border-[#ababab]">
          <div className="flex pt-[3px] pl-[19px] pr-[2px] gap-[3px]">
            <Total t="3" w="w-[62px]" />
            <div className="flex-1" />
            <Total t="$0.00" w="w-[83px]" />
            <Total t="$0.00" w="w-[63px]" />
            <Total t="$6,122.00" w="w-[97px]" />
          </div>
          <div className="flex justify-center mt-[8px]">
            <span className="w-[19px] border-t-2 border-dotted border-[#8a8a8a]" />
          </div>
        </div>
        <div className="flex-1 flex flex-col pl-[9px] pr-[10px] pb-[10px]">
          <div className="flex items-end h-[26px] shrink-0">
            <Tab icon="table" t="Setup" w="w-[66px]" on />
            <Tab icon="staff" t="Staffing" w="w-[83px]" />
            <Tab icon="cutlery" t="Catering" w="w-[85px]" />
            <Tab icon="glass" t="Beverages" w="w-[93px]" />
            <Tab icon="package" t="Packages" w="w-[85px]" />
            <Tab icon="notes" t="Notes" w="w-[71px]" />
            <Tab icon="floor" t="Floor Plans" w="w-[95px]" />
            <Tab icon="image" t="Images" w="w-[75px]" />
          </div>
          <div className="flex-1 flex flex-col border border-[#ababab]">
            <Toolbar a={lowTools} b={lowToolsEnd} h="h-[26px]" />
            <LowGrid />
          </div>
        </div>
      </div>
    </div>
  )
}

export default function App() {
  return (
    <div className={`${FONT} relative w-[1447px] h-[765px] bg-black pl-[8px] pr-[8px] pt-[7px] pb-[7px] flex flex-col overflow-hidden text-[11px]`}>
      <div className="flex-1 flex flex-col bg-white border-t border-r border-[#0072c6]">
        {/* title bar */}
        <div className="h-[31px] shrink-0 pb-[3px] grid grid-cols-[1fr_auto_1fr] items-center">
          <div className="flex items-center -ml-px">
            {['logo', 'clock', 'doc', 'clock', 'clock', 'mail', 'refresh', 'clip'].map((n, i) => (
              <span key={i} className="w-[28px] flex justify-center"><Ico n={n} s={17} /></span>
            ))}
            <span className="ml-[14px] flex flex-col items-center gap-px">
              <span className="w-[6px] border-t border-[#666]" />
              <Caret />
            </span>
          </div>
          <div className="pt-[2px] text-[#6a6a6a] whitespace-nowrap">Q000012B: Scientific Research Conference - Event Quote - EventPro</div>
          <div className="flex justify-end items-center pr-[13px] gap-[21px]">
            <svg width="14" height="13" viewBox="0 0 14 13"><path d="M.5.5h13v12H.5zM.5 3h13M7 11V5M4.500 7L7 4.500 9.500 7" fill="none" stroke="#666" /></svg>
            <span className="w-[9px] h-[2px] mt-[6px] bg-[#666]" />
            <span className="w-[11px] h-[10px] border border-t-2 border-[#444]" />
            <svg width="11" height="11" viewBox="0 0 11 11"><path d="M1 1l9 9M10 1l-9 9" stroke="#444" strokeWidth="1.800" /></svg>
          </div>
        </div>
        {/* ribbon tabs */}
        <div className="h-[22px] shrink-0 flex border-b border-[#d2d2d2] text-[#3a4050]">
          <div className="w-[68px] bg-[#0072c6] flex items-center justify-center"><Ico n="logo" s={20} /></div>
          <div className="w-[53px] h-[22px] pt-[4px] border border-b-0 border-[#d2d2d2] bg-white flex items-center justify-center text-[#0e70c0]">Home</div>
          <div className="w-[47px] pt-[4px] flex items-center justify-center">View</div>
          <div className="w-[53px] pt-[4px] flex items-center justify-center">Tools</div>
        </div>
        {/* ribbon */}
        <div className="h-[93px] shrink-0 flex border-b border-[#d2d2d2]">
          <RibbonGroup label="Edit" w="w-[476px]" pl="pl-[5px]">
            <RibbonBtn icon="gear" lines={['Edit Event', 'Quote']} w="w-[58px]" />
            <RibbonBtn icon="cart" s={30} lines={['Create', 'Revision']} w="w-[56px]" />
            <RibbonBtn icon="pin" s={30} lines={['Create', 'Booking']} w="w-[48px]" />
            <RibbonBtn icon="info" s={30} lines={['Change', 'Status']} w="w-[58px]" caret />
            <RibbonBtn icon="mail" s={28} lines={['Send Email']} w="w-[62px]" caret />
            <RibbonBtn icon="note" s={29} lines={['Add Note']} w="w-[60px]" />
            <RibbonBtn icon="task" s={30} lines={['Add Task']} w="w-[56px]" />
            <RibbonBtn icon="calc" s={30} lines={['Recalculate']} w="w-[68px]" />
          </RibbonGroup>
          <RibbonGroup label="Open Related Record" w="w-[137px]" pl="">
            <RibbonBtn icon="openrec" s={29} lines={['Open Related', 'Record']} w="w-[136px]" off />
          </RibbonGroup>
          <RibbonGroup label="View" w="w-[155px]" pl="pl-[4px]">
            <RibbonBtn icon="refresh" s={29} lines={['Refresh']} w="w-[48px]" />
            <RibbonBtn icon="audit" lines={['Audit', 'Log']} w="w-[48px]" />
            <RibbonBtn icon="clip" s={30} lines={['Reports']} w="w-[48px]" />
          </RibbonGroup>
          <RibbonGroup label="Records Navigation" w="w-[311px]" pl="pl-[4px]">
            <RibbonBtn icon="binoc" s={25} lines={['Find']} w="w-[42px]" />
            <RibbonBtn icon="first" s={25} lines={['First']} w="w-[48px]" />
            <RibbonBtn icon="prev" s={25} lines={['Previous']} w="w-[52px]" />
            <RibbonBtn icon="next" s={25} lines={['Next']} w="w-[46px]" />
            <RibbonBtn icon="last" s={25} lines={['Last']} w="w-[44px]" />
            <RibbonBtn icon="hash" s={28} lines={['By Quote #']} w="w-[70px]" caret />
          </RibbonGroup>
          <RibbonGroup label="Close" w="w-[60px]" pl="">
            <RibbonBtn icon="closeRed" s={28} lines={['Close']} w="w-[56px]" />
          </RibbonGroup>
          <div className="flex-1 flex justify-end items-end pr-[10px] pb-[6px]">
            <svg width="10" height="7" viewBox="0 0 10 7"><path d="M1 6l4-4 4 4" fill="none" stroke="#777" strokeWidth="2" /></svg>
          </div>
        </div>
        {/* body */}
        <div className="flex-1 flex min-h-0">
          <Sidebar />
          <main className="flex-1 min-w-0 flex flex-col">
            <div className="h-[28px] shrink-0 flex items-end justify-between border-b-2 border-[#0072c6] pr-[6px]">
              <div className="w-[189px] h-[24px] bg-[#0072c6] text-white flex items-center pl-[12px] gap-[3px]">
                <Ico n="cart" s={16} />
                <span className="flex-1 pt-[2px] whitespace-nowrap">Q000012B: Scientific Re...</span>
                <svg className="mr-[9px]" width="9" height="9" viewBox="0 0 9 9"><path d="M1 1l7 7M8 1L1 8" stroke="#fff" strokeWidth="1.800" /></svg>
              </div>
              <span className="mb-[11px]"><Caret c="border-t-[#666]" /></span>
            </div>
            <div className="flex-1 flex flex-col pl-[10px] pr-[10px] pb-[10px] min-h-0">
              <QuoteForm />
              <div className="flex items-end h-[26px] mt-[3px] shrink-0">
                <Tab icon="detail" t="Event Detail" w="w-[101px]" on />
                <Tab icon="calcgrey" t="Financial" w="w-[82px]" />
                <Tab icon="bubble" t="Communications" w="w-[119px]" />
                <Tab icon="task" t="Tasks" w="w-[69px]" />
                <Tab icon="docblue" t="Documents" w="w-[96px]" />
              </div>
              <DetailPanel />
            </div>
          </main>
        </div>
        {/* status bar */}
        <div className="h-[24px] shrink-0 bg-[#0072c6] flex items-end justify-end pr-[2px] pb-[2px]">
          <span className="w-[8px] h-[8px] border-r-2 border-b-2 border-dotted border-[#b8d8f0]" />
        </div>
      </div>
      {/* annotation arrow over the form */}
      <svg className="absolute left-[338px] top-[139px] pointer-events-none" width="104" height="98" viewBox="0 0 104 98">
        <path d="M2 96L14 62 24 72 97 2l5 5-72 73 8 6z" fill="#f00000" />
      </svg>
    </div>
  )
}
